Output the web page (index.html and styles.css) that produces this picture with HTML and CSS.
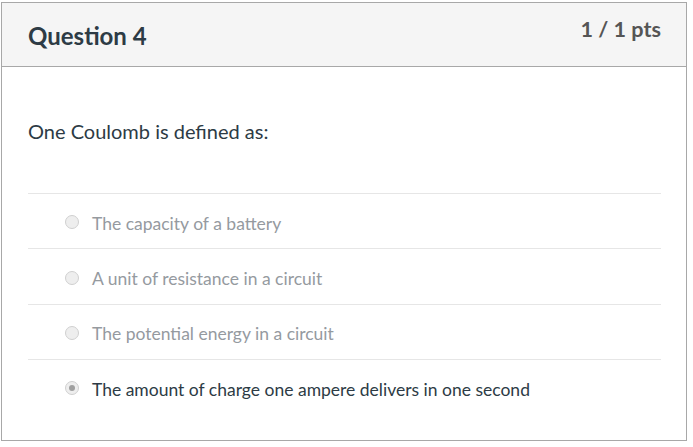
FILE: index.html
```html
<!DOCTYPE html>
<html>
<head>
<meta charset="utf-8">
<link rel="stylesheet" href="styles.css">
</head>
<body>
<div class="card">
  <div class="header">
    <h2 class="title">Question 4</h2>
    <div class="pts">1 / 1 pts</div>
  </div>
  <div class="body">
    <p class="question">One Coulomb is defined as:</p>
    <div class="answers">
      <div class="answer"><span class="radio"></span><span class="label muted">The capacity of a battery</span></div>
      <div class="answer"><span class="radio"></span><span class="label muted">A unit of resistance in a circuit</span></div>
      <div class="answer"><span class="radio"></span><span class="label muted">The potential energy in a circuit</span></div>
      <div class="answer"><span class="radio checked"></span><span class="label">The amount of charge one ampere delivers in one second</span></div>
    </div>
  </div>
</div>
</body>
</html>
```
FILE: styles.css
```css
html, body {
  margin: 0;
  padding: 0;
  background: #fff;
}
body {
  font-family: Lato, "Open Sans", sans-serif;
  color: #2d3b45;
}
.card {
  margin: 2px 0 0 1px;
  width: 686px;
  height: 439px;
  box-sizing: border-box;
  border: 1px solid #a8a8a8;
}
.header {
  height: 64px;
  box-sizing: border-box;
  background: #f5f5f5;
  border-bottom: 1px solid #a8a8a8;
  display: flex;
  justify-content: space-between;
  align-items: flex-start;
  padding: 0 25px 0 26px;
}
.title {
  margin: 18px 0 0;
  font-size: 24px;
  font-weight: 700;
  line-height: 30px;
  color: #2d3b45;
}
.pts {
  margin-top: 12px;
  font-size: 21.6px;
  font-weight: 700;
  line-height: 28px;
  color: #555;
}
.body {
  padding: 0 25px 0 26px;
}
.question {
  margin: 0;
  padding: 51px 0 49px;
  font-size: 20px;
  line-height: 26px;
}
.answer {
  height: 55.4px;
  box-sizing: border-box;
  border-top: 1px solid #e6e6e6;
  display: flex;
  align-items: center;
  padding-left: 38px;
}
.radio {
  flex: none;
  width: 14px;
  height: 14px;
  box-sizing: border-box;
  border-radius: 50%;
  border: 1px solid #d0d0d0;
  background: #eee;
  display: flex;
  align-items: center;
  justify-content: center;
  margin: 2px 13px 0 -1px;
}
.radio.checked::after {
  content: "";
  width: 6px;
  height: 6px;
  border-radius: 50%;
  background: #a0a0a0;
}
.label {
  font-size: 17.5px;
  line-height: 24px;
  padding-top: 5px;
  color: #2d3b45;
}
.label.muted {
  color: #959a9f;
}
```
